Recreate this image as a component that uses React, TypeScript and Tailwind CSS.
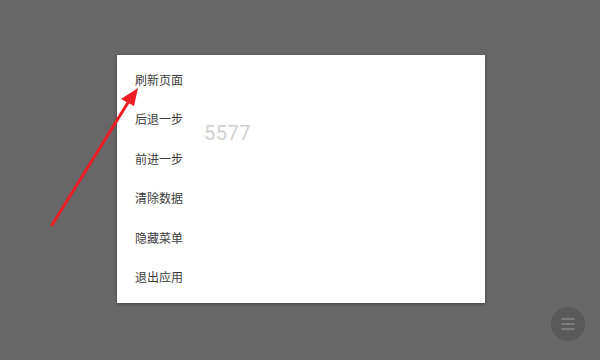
import React from 'react';

const items = ['刷新页面', '后退一步', '前进一步', '清除数据', '隐藏菜单', '退出应用'];

export default function App() {
  return (
    <div
      className="relative w-[600px] h-[360px] overflow-hidden bg-[#676767]"
      style={{ fontFamily: '"Noto Sans CJK SC", "Noto Sans", sans-serif' }}
    >
      <div className="pt-[55px] pl-[117px]">
        <div className="relative w-[368px] h-[248px] bg-white shadow-[0_1px_3px_rgba(0,0,0,0.35)] pt-[5px]">
          {items.map((t) => (
            <div key={t} className="h-[39.5px] flex items-center pl-[18px] text-[12px] text-[#3c3c3c]">
              {t}
            </div>
          ))}
          <div className="absolute left-[87px] top-[63px] text-[20px] text-[#d0d0d0] tracking-[0.5px] font-[Roboto,sans-serif]">
            5577
          </div>
        </div>
      </div>

      {/* floating menu button */}
      <div className="absolute left-[551px] top-[307px] w-[34px] h-[34px] rounded-full bg-[#5a5a5a] flex flex-col items-center justify-center gap-[2.5px]">
        <div className="w-[14px] h-[2.5px] rounded-full bg-[#7a7a7a]" />
        <div className="w-[14px] h-[2.5px] rounded-full bg-[#7a7a7a]" />
        <div className="w-[14px] h-[2.5px] rounded-full bg-[#7a7a7a]" />
      </div>

      {/* annotation arrow */}
      <svg className="absolute left-0 top-0" width="600" height="360" viewBox="0 0 600 360">
        <line x1="52" y1="225" x2="129" y2="101" stroke="#ee1c25" strokeWidth="3" strokeLinecap="round" />
        <polygon points="138,88 121,99 134,106" fill="#ee1c25" />
      </svg>
    </div>
  );
}
